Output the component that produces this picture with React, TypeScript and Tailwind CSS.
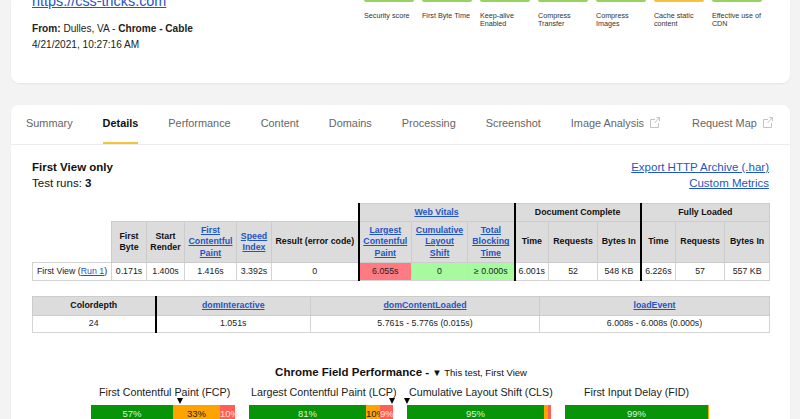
const font = "font-['Liberation_Sans',Arial,sans-serif]";
const th = "bg-[#dcdcdc] border border-[#cccccc] font-bold text-[8.8px] leading-[11.5px] text-[#111] text-center p-0 align-middle";
const td = "bg-white border border-[#d4d4d4] text-[8.8px] text-[#222] text-center p-0 align-middle";
const lnk = "text-[#1f55c4] underline";
const chips = [
  ["Security score", "bg-[#96d35f]"],
  ["First Byte Time", "bg-[#96d35f]"],
  ["Keep-alive Enabled", "bg-[#96d35f]"],
  ["Compress Transfer", "bg-[#96d35f]"],
  ["Compress Images", "bg-[#96d35f]"],
  ["Cache static content", "bg-[#f5c33b]"],
  ["Effective use of CDN", "bg-[#96d35f]"],
];
const tabs = ["Summary", "Details", "Performance", "Content", "Domains", "Processing", "Screenshot"];

function Ext() {
  return (
    <svg width="10" height="11" viewBox="0 0 10 11" fill="none" stroke="#c4c4c4" strokeWidth="1" className="ml-[6px] mt-[-3px] shrink-0">
      <path d="M5 2.5H.5v8h8V6M4.5 6 9.5.5M6.5.5h3V4" />
    </svg>
  );
}

function Bar({ label, segs, mark, labelPad }: { label: string; segs: [string, number, string, string][]; mark?: number; labelPad: string }) {
  return (
    <div className="w-[144px] shrink-0">
      <div className={`text-[10.7px] leading-[14px] text-[#222] whitespace-nowrap ${labelPad}`}>{label}</div>
      <div className="relative h-[6px]">
        {mark !== undefined && (
          <span className="absolute top-[-1px] w-0 h-0 border-l-[3.5px] border-r-[3.5px] border-t-[6px] border-l-transparent border-r-transparent border-t-black" style={{ left: mark }} />
        )}
      </div>
      <div className="flex h-[20px] text-[9.5px] leading-[18px] text-center">
        {segs.map(([c, w, t, tc], i) => (
          <div key={i} className="shrink-0 whitespace-nowrap" style={{ width: w, background: c, color: tc }}>{t}</div>
        ))}
      </div>
    </div>
  );
}

export default function App() {
  return (
    <div className={`${font} w-[800px] h-[419px] overflow-hidden bg-[#f3f3f3] pl-[11px] pr-[10px]`}>
      <div className="h-[83px] bg-white rounded-b-[8px] shadow-[0_1px_2px_rgba(0,0,0,0.06)] pl-[21px] flex">
        <div className="w-[332px] shrink-0">
          <a className="block text-[14.4px] leading-[17px] mt-[-7px] text-[#1f55c4] underline whitespace-nowrap">https://css-tricks.com</a>
          <div className="text-[10.1px] leading-[16px] text-[#222] mt-[11px]">
            <b>From:</b> Dulles, VA - <b>Chrome - Cable</b>
          </div>
          <div className="text-[10.1px] leading-[16px] text-[#222]">4/21/2021, 10:27:16 AM</div>
        </div>
        <div className="flex gap-[7.6px]">
          {chips.map(([t, c]) => (
            <div key={t} className="w-[50.4px]">
              <div className={`h-[2px] rounded-b-[3px] ${c}`} />
              <div className="text-[7.2px] leading-[8.7px] text-[#333] mt-[9.5px]">{t}</div>
            </div>
          ))}
        </div>
      </div>

      <div className="mt-[22px] h-[400px] bg-white rounded-t-[8px] shadow-[0_1px_2px_rgba(0,0,0,0.06)]">
        <div className="h-[40px] border-b border-[#ececec] flex pl-[15px] text-[10.9px] leading-[37px] text-[#666] whitespace-nowrap">
          {tabs.map((t, i) => (
            <div key={t} className={`relative h-[39px] mr-[30px] ${i === 1 ? "font-bold text-[#111]" : ""}`}>
              {t}
              {i === 1 && <span className="absolute left-0 right-0 bottom-0 h-[2px] bg-[#f5c33b]" />}
            </div>
          ))}
          <div className="flex items-center h-[37px] mr-[32px]">Image Analysis<Ext /></div>
          <div className="flex items-center h-[37px]">Request Map<Ext /></div>
        </div>

        <div className="pl-[21px] pr-[20px]">
          <div className="flex justify-between pt-[14px] text-[11.5px] leading-[16px]">
            <div className="text-[#111]">
              <div className="font-bold">First View only</div>
              <div>Test runs: <b>3</b></div>
            </div>
            <div className="text-right pr-[1px]">
              <a className={`block ${lnk}`}>Export HTTP Archive (.har)</a>
              <a className={`block ${lnk}`}>Custom Metrics</a>
            </div>
          </div>

          <table className="mt-[12px] w-[737px] table-fixed border-collapse">
            <colgroup>
              {[79, 35, 38, 52, 35, 87, 53, 56, 47, 34, 49, 43, 35, 49, 45].map((w, i) => <col key={i} style={{ width: w }} />)}
            </colgroup>
            <tbody>
              <tr className="h-[18px]">
                <th colSpan={6} className="bg-white p-0" />
                <th colSpan={3} className={`${th} border-l-2 border-l-black`}><a className={lnk}>Web Vitals</a></th>
                <th colSpan={3} className={`${th} border-l-2 border-l-black`}>Document Complete</th>
                <th colSpan={3} className={`${th} border-l-2 border-l-black`}>Fully Loaded</th>
              </tr>
              <tr className="h-[41px]">
                <th className="bg-white p-0" />
                <th className={th}>First<br />Byte</th>
                <th className={th}>Start<br />Render</th>
                <th className={th}><a className={lnk}>First<br />Contentful<br />Paint</a></th>
                <th className={th}><a className={lnk}>Speed<br />Index</a></th>
                <th className={th}>Result (error code)</th>
                <th className={`${th} border-l-2 border-l-black`}><a className={lnk}>Largest<br />Contentful<br />Paint</a></th>
                <th className={th}><a className={lnk}>Cumulative<br />Layout<br />Shift</a></th>
                <th className={th}><a className={lnk}>Total<br />Blocking<br />Time</a></th>
                <th className={`${th} border-l-2 border-l-black`}>Time</th>
                <th className={th}>Requests</th>
                <th className={th}>Bytes In</th>
                <th className={`${th} border-l-2 border-l-black`}>Time</th>
                <th className={th}>Requests</th>
                <th className={th}>Bytes In</th>
              </tr>
              <tr className="h-[18px]">
                <td className={`${td} whitespace-nowrap`}>First View (<a className={lnk}>Run 1</a>)</td>
                <td className={td}>0.171s</td>
                <td className={td}>1.400s</td>
                <td className={td}>1.416s</td>
                <td className={td}>3.392s</td>
                <td className={td}>0</td>
                <td className={`${td} !bg-[#ff7b84] border-l-2 border-l-black`}>6.055s</td>
                <td className={`${td} !bg-[#a6fb9f]`}>0</td>
                <td className={`${td} !bg-[#a6fb9f]`}>≥ 0.000s</td>
                <td className={`${td} border-l-2 border-l-black`}>6.001s</td>
                <td className={td}>52</td>
                <td className={td}>548 KB</td>
                <td className={`${td} border-l-2 border-l-black`}>6.226s</td>
                <td className={td}>57</td>
                <td className={td}>557 KB</td>
              </tr>
            </tbody>
          </table>

          <table className="mt-[15px] w-[737px] table-fixed border-collapse">
            <colgroup>
              {[123, 155, 229, 230].map((w, i) => <col key={i} style={{ width: w }} />)}
            </colgroup>
            <tbody>
              <tr className="h-[19px]">
                <th className={th}>Colordepth</th>
                <th className={`${th} border-l-2 border-l-black`}><a className={lnk}>domInteractive</a></th>
                <th className={th}><a className={lnk}>domContentLoaded</a></th>
                <th className={th}><a className={lnk}>loadEvent</a></th>
              </tr>
              <tr className="h-[17px]">
                <td className={td}>24</td>
                <td className={`${td} border-l-2 border-l-black`}>1.051s</td>
                <td className={td}>5.761s - 5.776s (0.015s)</td>
                <td className={td}>6.008s - 6.008s (0.000s)</td>
              </tr>
            </tbody>
          </table>

          <div className="mt-[30px] text-center leading-[16px] text-[#111]">
            <b className="text-[11.5px]">Chrome Field Performance - </b>
            <span className="text-[9.5px]">▼ This test, First View</span>
          </div>

          <div className="mt-[4px] ml-[59px] flex gap-[14px]">
            <Bar label="First Contentful Paint (FCP)" labelPad="pl-[8px]" mark={86} segs={[["#079408", 82, "57%", "#dff0df"], ["#fda400", 47, "33%", "#222"], ["#ff5f55", 15, "10%", "#ffe0dd"]]} />
            <Bar label="Largest Contentful Paint (LCP)" labelPad="pl-[2px]" mark={140} segs={[["#079408", 117, "81%", "#dff0df"], ["#fda400", 14, "10%", "#222"], ["#ff5f55", 13, "9%", "#ffe0dd"]]} />
            <Bar label="Cumulative Layout Shift (CLS)" labelPad="pl-[2px]" mark={-3} segs={[["#079408", 137, "95%", "#dff0df"], ["#fda400", 4, "", "#222"], ["#ff5f55", 3, "", "#222"]]} />
            <Bar label="First Input Delay (FID)" labelPad="pl-[19px]" segs={[["#079408", 143, "99%", "#dff0df"], ["#fda400", 1, "", "#222"]]} />
          </div>
        </div>
      </div>
    </div>
  );
}
